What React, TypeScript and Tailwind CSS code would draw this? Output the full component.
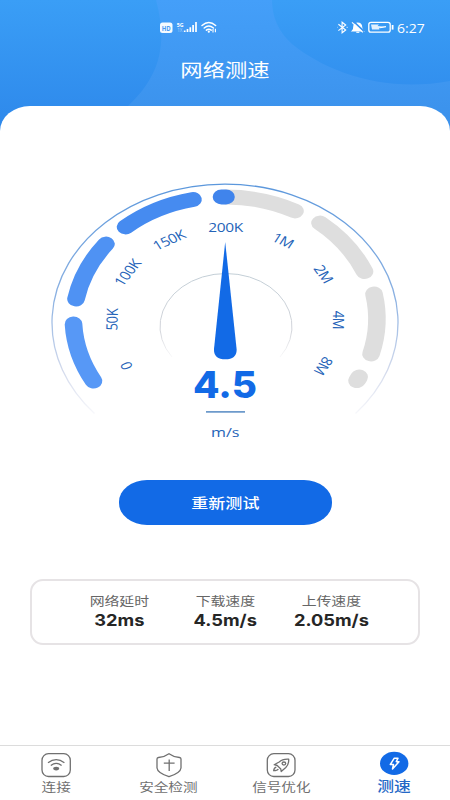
import type { ReactNode } from "react";

const labels = [
  { text: "0", x: 126.5, y: 366, angle: -114 },
  { text: "50K", x: 112, y: 319.5, angle: -89 },
  { text: "100K", x: 127.5, y: 272.5, angle: -56 },
  { text: "150K", x: 169, y: 240, angle: -28 },
  { text: "200K", x: 225.5, y: 227.5, angle: 0 },
  { text: "1M", x: 283, y: 240.5, angle: 29 },
  { text: "2M", x: 323.5, y: 274, angle: 59 },
  { text: "4M", x: 338.5, y: 320, angle: 91 },
  { text: "8M", x: 323.5, y: 366, angle: 119 },
];

// start and end of every segment of the dial
const segments = [
  { from: [93.5, 381], to: [73.5, 324], color: "#5798f6" },
  { from: [76, 299], to: [106, 244], color: "#4f92f3" },
  { from: [125.5, 227], to: [193, 199.5], color: "#468bf0" },
  { from: [226, 197], to: [295, 211], color: "#dedede" },
  { from: [320, 223], to: [364.5, 271.5], color: "#dedede" },
  { from: [374, 294], to: [371, 354], color: "#dedede" },
  { from: [359.2, 377], to: [357, 380.7], color: "#dedede" },
  { from: [221.5, 197], to: [226, 197], color: "#4084ec" },
];

const stats = [
  { label: "网络延时", value: "32ms" },
  { label: "下载速度", value: "4.5m/s" },
  { label: "上传速度", value: "2.05m/s" },
];

const STRETCH = 1.19;

const StatusBar = () => {
  return (
    <div className="flex h-[54px] items-center justify-between pl-[160px] pr-[25px] text-white">
      <div className="flex items-center gap-1">
        <svg width="58" height="16" viewBox="160 19 58 16" fill="none">
          <rect x="160" y="22.5" width="12.5" height="10.5" rx="2.5" fill="white" fillOpacity="0.95" />
          <text x="166.2" y="30.6" textAnchor="middle" textLength="9" lengthAdjust="spacingAndGlyphs" fontSize="7.5" fontWeight="700" fontFamily="Open Sans" fill="#4a9bf3">HD</text>
          <text x="176.8" y="26.8" fontSize="6" textLength="6.8" lengthAdjust="spacingAndGlyphs" fontWeight="700" fontFamily="Open Sans" fill="white">5G</text>
          <text x="177.2" y="32.3" fontSize="4.5" fontFamily="Open Sans" fill="white" opacity="0.5">1X</text>
          <path d="M184.7 32v-1.6M187.5 32v-3M190.3 32v-4.8M193.1 32v-7M196 32V22" stroke="white" strokeWidth="1.7" />
          <g stroke="white" strokeWidth="1.5" strokeLinecap="round">
            <path d="M202 25.5q6.8-6 13.6 0" />
            <path d="M204.2 28q4.6-4 9.2 0" />
            <path d="M206.4 30.2q2.4-2 4.8 0" />
          </g>
          <circle cx="208.8" cy="31.7" r="1.1" fill="white" />
          <path d="M213 29v3.4M215.4 32.2v-3.4" stroke="white" strokeWidth="1.1" />
        </svg>
      </div>
      <div className="flex items-center">
        <svg width="60" height="16" viewBox="336 19 60 16" fill="none" stroke="white" strokeWidth="1.1">
          <path d="M338.4 24.3l7.3 5.7-3.6 2.8v-10.6l3.6 2.8-7.3 5.6" />
          <path d="M346.7 27.4h.8M338 27.4h-.3" />
          <path d="M352.3 31q1.5-1.2 1.5-4.2 0-3.4 3.6-3.7 4.3.2 4.3 4 0 2.7 1.6 3.9z" fill="white" />
          <path d="M356.3 32.3h3" />
          <path d="M353.5 21.3l10.5 10" stroke="#3994f1" strokeWidth="1.6" />
          <path d="M352 22.4l10.8 10" />
          <rect x="368.8" y="22.3" width="21.4" height="9.8" rx="2.2" strokeWidth="1.3" />
          <path d="M371 24.5h8l-1.5 1.5 7.8.8-6 1.2v1.5h-7.3z" fill="white" fillOpacity="0.85" stroke="none" />
          <path d="M380 27.8l6-1.2" />
          <path d="M392.6 25v4.6" strokeWidth="1.8" />
        </svg>
        <span className="-mt-px w-[29px] text-right">
          <span className="inline-block origin-right scale-x-[1.12] font-['Open_Sans',sans-serif] text-[12.5px] leading-4">
            6:27
          </span>
        </span>
      </div>
    </div>
  );
};

const Gauge = () => {
  return (
    <svg className="block" width="450" height="284" viewBox="0 166 450 284" fill="none">
      <defs>
        <linearGradient id="rim" x1="0" y1="183" x2="0" y2="418" gradientUnits="userSpaceOnUse">
          <stop offset="0" stopColor="#5b97dc" />
          <stop offset="0.5" stopColor="#8db2e2" />
          <stop offset="0.8" stopColor="#d3daec" />
          <stop offset="1" stopColor="#fafafc" />
        </linearGradient>
        <linearGradient id="innerRim" x1="0" y1="272" x2="0" y2="362" gradientUnits="userSpaceOnUse">
          <stop offset="0" stopColor="#c2ced6" />
          <stop offset="0.65" stopColor="#d2d4da" />
          <stop offset="1" stopColor="#ffffff" />
        </linearGradient>
      </defs>

      <path d="M94.5 413.5A173 138.5 0 1 1 355.5 413.5" stroke="url(#rim)" strokeWidth="1.3" />
      <path d="M172 357A66 53 0 1 1 280 357" stroke="url(#innerRim)" />

      {segments.map(({ from, to, color }, i) => (
        <path
          key={i}
          transform={`scale(${STRETCH} 1)`}
          d={`M${from[0] / STRETCH} ${from[1]}A127.5 127.5 0 0 1 ${to[0] / STRETCH} ${to[1]}`}
          stroke={color}
          strokeWidth="14.8"
          strokeLinecap="round"
        />
      ))}

      {labels.map(({ text, x, y, angle }) => (
        <text
          key={text}
          transform={`translate(${x} ${y}) scale(${STRETCH} 1) rotate(${angle})`}
          y="4.7"
          textAnchor="middle"
          fontSize="13"
          letterSpacing="-0.3"
          fontFamily="Open Sans"
          fill="#2463b8"
        >
          {text}
        </text>
      ))}

      <path d="M225.2 242L214 349C213.6 355.5 217.5 359.3 225.3 359.3S237 355.5 236.6 349Z" fill="#126ae6" />

      <text x="193" y="398" textLength="64" lengthAdjust="spacingAndGlyphs" fontSize="37.5" fontWeight="800" fontFamily="Inter" fill="#126ae6">
        4.5
      </text>
      <path d="M206 411.900h39" stroke="#6d9acb" strokeWidth="1.8" />
      <text x="211" y="436.7" textLength="28.5" lengthAdjust="spacingAndGlyphs" fontSize="13" fontFamily="Open Sans" fill="#2463b8">
        m/s
      </text>
    </svg>
  );
};

const NavItem = ({ label, active, children }: { label: string; active?: boolean; children: ReactNode }) => {
  return (
    <button className="flex flex-col items-center">
      <svg width="32" height="28" viewBox="0 0 32 28" fill="none" stroke="#707070" strokeWidth="1.3">
        {children}
      </svg>
      {active ? (
        <span className="-mt-[3px] scale-x-[1.2] text-[14px] font-medium leading-5 text-[#2468c6]">{label}</span>
      ) : (
        <span className="-mt-px scale-x-[1.2] text-[12.2px] leading-[19px] text-[#707070]">{label}</span>
      )}
    </button>
  );
};

const App = () => {
  return (
    <div className="flex h-[800px] w-[450px] flex-col overflow-hidden bg-white font-['Noto_Sans','Noto_Sans_CJK_SC',sans-serif]">
      <header className="relative h-[106px] shrink-0">
        <svg className="absolute left-0 top-0" width="450" height="136" viewBox="0 0 450 136">
          <defs>
            <linearGradient id="sky" x1="0" y1="0" x2="0" y2="1">
              <stop offset="0" stopColor="#3a9ef6" />
              <stop offset="1" stopColor="#2d87ea" />
            </linearGradient>
            <linearGradient id="band" x1="0" y1="0" x2="0" y2="136" gradientUnits="userSpaceOnUse">
              <stop offset="0" stopColor="#449ff9" />
              <stop offset="1" stopColor="#3a90ea" />
            </linearGradient>
          </defs>
          <rect width="450" height="136" fill="url(#sky)" />
          <path d="M156 0C168 44 160 76 128 106V136H450V81C386 93 328 73 292 44Q272 26 272 0Z" fill="url(#band)" />
        </svg>
        <div className="relative">
          <StatusBar />
          <h1 className="scale-x-[1.2] text-center text-[18.6px] leading-8 text-white">网络测速</h1>
        </div>
      </header>

      <main className="relative flex grow flex-col rounded-t-[30px_25px] bg-white pt-[60px]">
        <Gauge />
        <button className="mx-auto mt-[30px] h-[45px] w-[213px] rounded-[28px/22px] bg-[#126ae6] pb-0.5 text-white">
          <span className="inline-block scale-x-[1.2] text-[14.2px] font-medium leading-5">重新测试</span>
        </button>
        <section className="mx-[30px] mt-[54px] flex h-[66px] justify-center rounded-[13px] border-2 border-[#e6e3e5] pt-3">
          {stats.map((stat) => (
            <div key={stat.label} className="flex w-[106px] flex-col items-center whitespace-nowrap">
              <span className="scale-x-[1.22] text-[12.2px] leading-[18px] text-[#666]">{stat.label}</span>
              <span className="-mt-px scale-x-[1.12] font-['Inter',sans-serif] text-[16.3px] font-bold leading-5 text-[#262626]">
                {stat.value}
              </span>
            </div>
          ))}
        </section>
      </main>

      <nav className="grid h-[55px] shrink-0 grid-cols-4 border-t border-[#dcdcdc] pt-[5px]">
        <NavItem label="连接">
          <rect x="2" y="2.7" width="28.3" height="22.8" rx="6.5" />
          <path d="M8 11.8q8.200-6.400 16.400 0M10.800 14.600q5.400-4.400 10.800 0" />
          <ellipse cx="16.2" cy="17.6" rx="3" ry="1.8" fill="#707070" stroke="none" />
        </NavItem>
        <NavItem label="安全检测">
          <path d="M16 2.7Q20.500 6 26.500 6.500Q28 6.700 28 8V17Q27.500 22 16 25.700Q4.500 22 4 17V8Q4 6.700 5.500 6.500Q11.500 6 16 2.700Z" />
          <path d="M16.200 8.500V20M10.800 12.200H21.600" />
        </NavItem>
        <NavItem label="信号优化">
          <rect x="2.300" y="2.700" width="27.700" height="22.800" rx="6.500" />
          <path d="M23.700 8.200Q17.500 7.800 14.200 11L9.200 13.700 12.200 14.500 15.800 18 16.200 20.500 20.800 16.500Q24 13.300 23.700 8.200Z" strokeLinejoin="round" />
          <ellipse cx="18.900" cy="12.500" rx="1.800" ry="1.500" />
          <path d="M11.300 16.200Q8.800 17 8.700 19.700Q12.300 19.700 13.300 18" />
        </NavItem>
        <NavItem label="测速" active>
          <ellipse cx="16.200" cy="12.400" rx="14.200" ry="11.600" fill="#126ae6" stroke="none" />
          <path d="M16.300 7.200H20L18.300 10.700H21L14.500 18 15.500 13.500H12.300Z" stroke="white" strokeWidth="1.5" strokeLinejoin="round" />
        </NavItem>
      </nav>
    </div>
  );
};

export default App;
